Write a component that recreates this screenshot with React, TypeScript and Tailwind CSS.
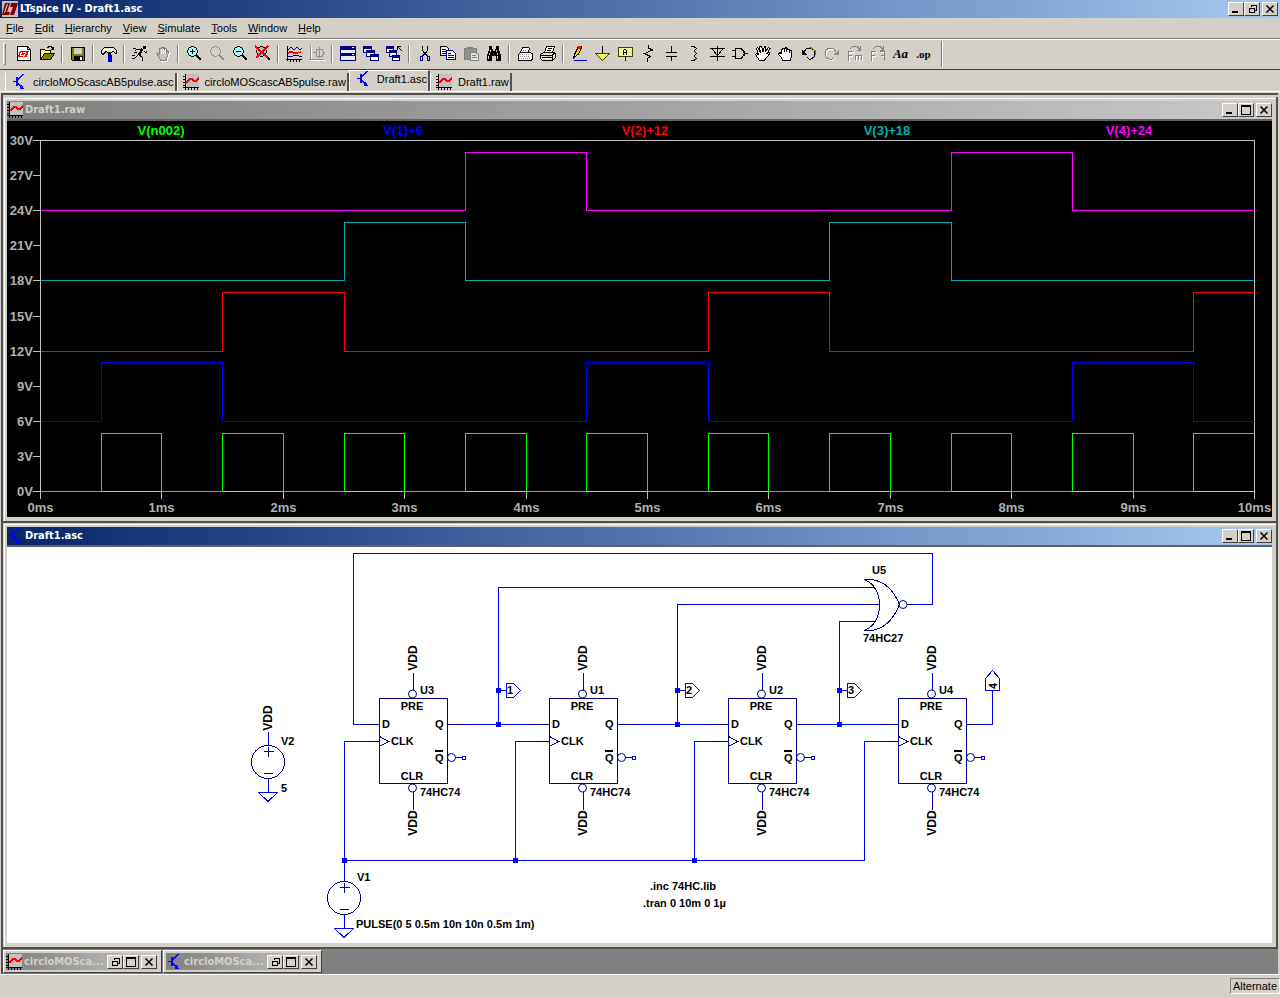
import type { ReactNode } from "react";

const MENU = ["File", "Edit", "Hierarchy", "View", "Simulate", "Tools", "Window", "Help"];

function Icon({ children, size = 17 }: { children: ReactNode; size?: number }) {
  return (
    <svg
      width={size}
      height={size}
      viewBox={`0 0 ${size} ${size}`}
      fill="none"
      stroke="#000"
      shapeRendering="crispEdges"
      className="block shrink-0"
      aria-hidden="true"
    >
      {children}
    </svg>
  );
}

function PlotIcon() {
  return (
    <Icon size={16}>
      <path d="M2 0h14v13H2z" fill="#c0c0c0" stroke="none" />
      <path d="M2.500 0v16M0 13.500h16M0 2.500h2M0 5.500h2M0 8.500h2M0 11.500h2M5.500 14v2M8.500 14v2M11.500 14v2M14.500 14v2" />
      <path d="M3 9l4-4h2l2 2h2l3-3" stroke="#f00" strokeWidth="2" />
    </Icon>
  );
}

function TransistorIcon() {
  return (
    <Icon size={16}>
      <path d="M2 7.500h3M7 5.500L12.500 0M7 9.500l5 5" stroke="#00f" />
      <path d="M6 3v9" stroke="#00f" strokeWidth="2" />
      <path d="M10 11h1l2 4h-4v-1z" fill="#00f" stroke="none" />
    </Icon>
  );
}

function LogoIcon() {
  return (
    <Icon size={16}>
      <path d="M0 0h16v16H0z" fill="#c0c0c0" stroke="none" />
      <path d="M3 2h5L5 11h3l-1 3H0z" fill="#800000" stroke="none" shapeRendering="auto" />
      <path d="M9 2h7l-4 12H8l3-8H8z" fill="#800000" stroke="none" shapeRendering="auto" />
      <path d="M5.500 3l-3 8.500" stroke="#e8e4e0" shapeRendering="auto" />
    </Icon>
  );
}

function Magnifier({ lens, stroke = "#000", children }: { lens: string; stroke?: string; children?: ReactNode }) {
  return (
    <>
      <circle cx="7.500" cy="6.500" r="4.800" fill={lens} stroke={stroke} />
      <path d="M11 10l5 5" stroke={stroke} strokeWidth="2.500" />
      {children}
    </>
  );
}

const HAND = "M5.500 15.500l-1-3-3-4 1-1 2 2v-6l1.500-.5.500 4v-5h2v5l1-4 1.500.5v5l1.500-2.500 1 1-1.500 5-1 3.500z";

type Tool = { name: string; art: ReactNode };

const TOOLS: Tool[][] = [
  [
    {
      name: "New Schematic",
      art: (
        <>
          <path d="M2.500 1.500h10l3 3v11h-13z" fill="#fff" />
          <path d="M12.500 1.500v3h3" />
          <path d="M5 6h9l-2 6H3z" fill="#f00" stroke="none" />
          <path d="M6.500 7l-1 3h3M8 7.500h3M10.500 8l-2 4" stroke="#fff" />
        </>
      ),
    },
    {
      name: "Open",
      art: (
        <>
          <path d="M2.500 13.500v-9h4l1 1h5v3" fill="#ffff80" />
          <path d="M2.500 14.500l4-6h10l-4 6z" fill="#808000" />
          <path d="M9.500 3l1.500-1.500h2l2 2M15.500 1.500v3h-3" />
        </>
      ),
    },
  ],
  [
    {
      name: "Save",
      art: (
        <>
          <path d="M2.500 2.500h13v13h-12l-1-1z" fill="#808000" />
          <path d="M5 3h8v6H5z" fill="#d4d0c8" stroke="none" />
          <path d="M5 11h9v4H5z" fill="#000" stroke="none" />
          <path d="M11 12h2v3h-2z" fill="#fff" stroke="none" />
        </>
      ),
    },
  ],
  [
    {
      name: "Control Panel",
      art: (
        <>
          <path d="M1.500 8.500v-3l3-3h9l3 3v3h-1l-2-2-3 1h-3l-1-1-2 1-1 2z" fill="#e4e2dc" />
          <path d="M5 4h8" stroke="#fff" />
          <path d="M9.500 8v2" strokeWidth="3" />
          <path d="M9.500 10v6.500" stroke="#00f" strokeWidth="3" />
          <path d="M11.500 10v6.500" stroke="#000080" />
        </>
      ),
    },
  ],
  [
    {
      name: "Run",
      art: (
        <>
          <path d="M12 1h3v3h-3z" fill="#000" stroke="none" />
          <path d="M11.500 4L8 10" strokeWidth="2.500" />
          <path d="M2 3.500h3M4 5.500l2-1h5M13 6l2 2 1-1.500M8 10l3 2v4M7 10l-3 3H1M3 7.500h3M1 10.500h3" />
        </>
      ),
    },
    {
      name: "Halt",
      art: (
        <>
          <path d={HAND} fill="#fff" stroke="#fff" transform="translate(2 1)" />
          <path d={HAND} fill="#c8c5be" stroke="#808080" transform="translate(1 0)" />
          <path d="M7.500 4v5M9.500 4v5M11.500 4v5" stroke="#fff" />
        </>
      ),
    },
  ],
  [
    {
      name: "Zoom to rectangle",
      art: (
        <Magnifier lens="#a0ffff">
          <path d="M5 6.500h5M7.500 4v5" strokeWidth="1.500" />
        </Magnifier>
      ),
    },
    { name: "Pan", art: <Magnifier lens="#d4d0c8" stroke="#909090" /> },
    {
      name: "Zoom back",
      art: (
        <Magnifier lens="#a0ffff">
          <path d="M5 6.500h5" />
        </Magnifier>
      ),
    },
    {
      name: "Zoom full extents",
      art: (
        <Magnifier lens="#60e0e8">
          <path d="M1 1l13 12M14 1L2 13" stroke="#f00" strokeWidth="2" />
        </Magnifier>
      ),
    },
  ],
  [
    {
      name: "Autorange",
      art: (
        <>
          <path d="M2.500 1v15M1 14.500h16M5.500 15v2M8.500 15v2M11.500 15v2M14.500 15v2" />
          <path d="M3 5l3-3 3 3 3-3 3 3 2-2M3 11.500h4l2-1h4l2 1h2" stroke="#000080" />
          <path d="M3 8l3-1.500 3 1.500h3l4-1" stroke="#f00" strokeWidth="1.500" />
        </>
      ),
    },
    {
      name: "Grid",
      art: (
        <>
          <path d="M3.500 2v14M2 15.500h15" stroke="#fff" />
          <path d="M2.500 1v14M1 14.500h15M5 7.500h3M8.500 4v8M9 4.500h5l2 3-2 4H9M11.500 2v11" stroke="#909090" />
        </>
      ),
    },
  ],
  [
    {
      name: "Tile",
      art: (
        <>
          <path d="M1.500 1.500h15v14h-15z" fill="#e8e8f0" stroke="#000080" />
          <path d="M1 3h16M1 9.500h16" stroke="#000080" strokeWidth="3" />
          <path d="M13 2.500h2M13 9.500h2" stroke="#fff" />
        </>
      ),
    },
    {
      name: "Cascade",
      art: (
        <>
          <path d="M1.500 1.500h8v6h-8zM4.500 5.500h8v6h-8zM8.500 9.500h8v6h-8z" fill="#fff" stroke="#000080" />
          <path d="M1 2.500h9M4 6.500h9M8 10.500h9" stroke="#000080" strokeWidth="2" />
        </>
      ),
    },
    {
      name: "Close all",
      art: (
        <>
          <path d="M1.500 1.500h7v6h-7zM4.500 5.500h7v6h-7zM7.500 10.500h7v5h-7z" fill="#fff" stroke="#000080" />
          <path d="M1 2.500h8M4 6.500h8M7 11.500h8" stroke="#000080" strokeWidth="2" />
          <path d="M12.500 5V1.500H16M13 2l4 4" />
        </>
      ),
    },
  ],
  [
    {
      name: "Cut",
      art: (
        <>
          <path d="M6.500 1v4l3 5M11.500 1v4l-3 5" />
          <path d="M8.500 9l-2 2M9.500 9l2 2" stroke="#000080" />
          <path d="M4.500 11.500h2v4h-2zM11.500 11.500h2v4h-2z" stroke="#000080" />
        </>
      ),
    },
    {
      name: "Copy",
      art: (
        <>
          <path d="M1.500 1.500h6l2 2v7h-8z" fill="#fff" />
          <path d="M3 4.500h4M3 6.500h4M3 8.500h4" />
          <path d="M7.500 5.500h6l3 3v6h-9z" fill="#fff" stroke="#000080" />
          <path d="M9 8.500h3M9 10.500h6M9 12.500h6" stroke="#000080" />
        </>
      ),
    },
    {
      name: "Paste",
      art: (
        <>
          <path d="M2.500 3.500h12v11h-12z" fill="#909090" stroke="#808080" />
          <path d="M5 2.500h6" stroke="#808080" strokeWidth="2" />
          <path d="M8.500 7.500h5l3 2v6h-8z" fill="#e4e2dc" stroke="#808080" />
          <path d="M10 10.500h4M10 12.500h5" stroke="#808080" />
        </>
      ),
    },
    {
      name: "Find",
      art: (
        <>
          <path d="M4 1h3v3h1v2h2V4h1V1h3v4l2 5v6h-5v-5H7v5H2v-6l2-5z" fill="#000" stroke="none" />
          <path d="M5.500 5v2M4.500 8v2M3.500 11v3M11.500 5v2M12.500 8v2M12.500 11v3" stroke="#d4d0c8" />
        </>
      ),
    },
  ],
  [
    {
      name: "Print Setup",
      art: (
        <>
          <path d="M4.500 7.500l2-5h6l1 1-1 4z" fill="#fff" />
          <path d="M2.500 9.500l2-2h10l1.500 1v6l-1 1h-12.500z" fill="#fff" />
          <path d="M7 5.500h4M4 9.500h10M4 11.500h10M5 13.500h9" stroke="#909090" strokeDasharray="1 1" />
        </>
      ),
    },
    {
      name: "Print",
      art: (
        <>
          <path d="M5.500 7.500l2-6h8l-2 6z" fill="#fff" />
          <path d="M1.500 9.500l3-2h11l1 1v4l-3 3h-10l-2-2z" fill="#e4e2dc" />
          <path d="M2 10.500h11v4M13 10.500l3-3M9 3.500h4M8 5.500h4M3 12.500h10" />
          <path d="M8 11.500h3" stroke="#c0c000" />
        </>
      ),
    },
  ],
  [
    {
      name: "Wire",
      art: (
        <>
          <path d="M4.500 11.500v-2l4-8h3v2l-4 7z" fill="#ffe000" />
          <path d="M8 2.500h3" stroke="#f00" strokeWidth="3" />
          <path d="M3 11h3l-3 4z" fill="#000" stroke="none" />
          <path d="M4 15.500h13" stroke="#00f" />
        </>
      ),
    },
    {
      name: "Ground",
      art: (
        <>
          <path d="M9.500 1v7" />
          <path d="M2.500 8.500h14l-7 7z" fill="#f0f060" stroke="#404000" />
        </>
      ),
    },
    {
      name: "Label Net",
      art: (
        <>
          <path d="M2.500 2.500h14v9h-14z" fill="#f4f4a0" stroke="#404000" strokeWidth="1.500" />
          <path d="M7.500 10V6l1-2h1l1 2v4M7.500 7.500h3M9.500 12v4" />
        </>
      ),
    },
    { name: "Resistor", art: <path d="M9.500 0v3l4 2-8 3.500 6 3-3 2v3.500" /> },
    { name: "Capacitor", art: <path d="M9.500 1v6M9.500 11v5M4 7h11M4 11h11" /> },
    { name: "Inductor", art: <path d="M6 1.500h3l2 1.500v1L9 6l2 2v1l-2 2 2 2v1l-2 1.500H6" /> },
    { name: "Diode", art: <path d="M9.500 1v15M2 3.500h15M4.500 4l5 7 5-7M2 11.500h15" /> },
    {
      name: "Component",
      art: <path d="M4.500 3.500h5l3 2 1 3-1 3-3 2h-5zM1 5.500h3M1 11.500h3M14 8.500h3" strokeWidth="1.500" />,
    },
    {
      name: "Move",
      art: (
        <path d="M5.500 15.500l-4-6 1-1 2 1-2-6 1-1 3 5-1-6h2l1.500 5 1.500-5h1v5l3-4 1.500 1-3 5 2-1v2l-4 5-1 1z" fill="#fff" />
      ),
    },
    {
      name: "Drag",
      art: (
        <>
          <path d="M5.500 15.500l-1-3-3-3 1-2 2 1v-4l2-1 1 1 1-2h1l1 2h2v1h2v6l-1 4z" fill="#fff" />
          <path d="M7.500 4v3M9.500 4v3M12.500 5v3" />
        </>
      ),
    },
    {
      name: "Undo",
      art: (
        <>
          <path d="M4 7l2-3 3-1h2l3 2 1 3-1 4-3 2H9l-2-2" />
          <path d="M9 2.500h2l4 3v4" stroke="#808000" />
          <path d="M1.500 4.500v5h5z" fill="#000" stroke="none" />
        </>
      ),
    },
    {
      name: "Redo",
      art: (
        <>
          <path d="M14 8l-2-3-3-1H7L4 6 3 9l1 4 3 2h3l2-2" stroke="#fff" />
          <path d="M13 7l-2-3-3-1H6L3 5 2 8l1 4 3 2h3l2-2" stroke="#808080" />
          <path d="M15.500 4.500v5h-5z" fill="#909090" stroke="none" />
        </>
      ),
    },
    {
      name: "Rotate",
      art: (
        <>
          <path d="M3.500 17V7.500H8M4 11.500h3M10.500 16v-4.500h6V16M13.500 12v4" stroke="#fff" />
          <path d="M2.500 16V6.500H7M3 10.500h3M9.500 15v-4.500h6V15M12.500 11v4M4 3.500l3-2h4l3 3M14.500 1v4h-4" stroke="#808080" />
        </>
      ),
    },
    {
      name: "Mirror",
      art: (
        <>
          <path d="M3.500 17V7.500H8M4 11.500h3M15.500 17V7.500H12M15 11.500h-2" stroke="#fff" />
          <path d="M2.500 16V6.500H7M3 10.500h3M15.500 16V6.500H11M15 10.500h-3M4 3.500l3-2h4l3 3M14.500 1v4h-4" stroke="#808080" />
        </>
      ),
    },
    { name: "Text", art: "Aa" },
    { name: "SPICE Directive", art: ".op" },
  ],
];

function ToolButton({ name, art }: Tool) {
  return (
    <button type="button" aria-label={name} className="flex h-[22px] w-[23px] items-center justify-center">
      {typeof art === "string" ? (
        <span
          className={`font-['Liberation_Serif',serif] leading-4 font-bold ${
            art === "Aa" ? "text-[13px] italic" : "text-[11px]"
          }`}
        >
          {art}
        </span>
      ) : (
        <Icon>{art}</Icon>
      )}
    </button>
  );
}

const GLYPHS = {
  Minimize: <path d="M2 9h6" strokeWidth="2" />,
  Restore: <path d="M5.500 4v-2h5v5H9M5 2h6M3.500 5.500h5v4h-5zM3 5h6" />,
  Maximize: <path d="M1.500 1.500h9v9h-9zM1 2h10" />,
  Close: <path d="M2.500 2.500l7 7M9.500 2.500l-7 7" strokeWidth="1.500" shapeRendering="auto" />,
};

function WindowButtons({ kinds }: { kinds: (keyof typeof GLYPHS)[] }) {
  return (
    <div className="flex shrink-0">
      {kinds.map((kind) => (
        <button
          key={kind}
          type="button"
          aria-label={kind}
          className="flex h-[14px] w-4 items-center justify-center border border-t-white border-r-[#404040] border-b-[#404040] border-l-white bg-[#d4d0c8] last:ml-0.5"
        >
          <Icon size={12}>{GLYPHS[kind]}</Icon>
        </button>
      ))}
    </div>
  );
}

function ChildWindow({
  title,
  icon,
  active = false,
  children,
}: {
  title: string;
  icon: ReactNode;
  active?: boolean;
  children: ReactNode;
}) {
  return (
    <section className="border-r-2 border-b-2 border-[#505050] bg-[#d4d0c8]">
      <div className="border-t border-l border-t-[#d4d0c8] border-l-[#d4d0c8]">
        <div className="border-t border-l border-white pt-0.5 pr-1 pb-1 pl-0.5">
          <header
            className={`flex h-[18px] items-center justify-between bg-linear-to-r ${
              active ? "from-[#0a246a] to-[#a6caf0] text-white" : "from-[#808080] to-[#c8c8c8] text-[#d4d0c8]"
            }`}
          >
            <div className="flex items-center gap-0.5">
              {icon}
              <h2 className="text-[11px] leading-4 font-bold">{title}</h2>
            </div>
            <WindowButtons kinds={["Minimize", "Maximize", "Close"]} />
          </header>
          <div className="border-t-2 border-[#606060]">{children}</div>
        </div>
      </div>
    </section>
  );
}

/* Waveform plot */

const X0 = 40;
const MS = 121.4;
const Y0 = 491;
const VOLT = 11.7;

const toX = (ms: number) => Math.round(X0 + ms * MS) + 0.5;
const toY = (v: number) => Math.round(Y0 - v * VOLT) + 0.5;

const TRACES = [
  { label: "V(4)+24", color: "#ff00ff", base: 24, rises: [3.5, 7.5], width: 1, labelX: 1129 },
  { label: "V(3)+18", color: "#00b0b0", base: 18, rises: [2.5, 6.5], width: 1, labelX: 887 },
  { label: "V(2)+12", color: "#ff0000", base: 12, rises: [1.5, 5.5, 9.5], width: 1, labelX: 645 },
  { label: "V(1)+6", color: "#0000ff", base: 6, rises: [0.5, 4.5, 8.5], width: 1, labelX: 403 },
  {
    label: "V(n002)",
    color: "#00ff00",
    base: 0,
    rises: [0.5, 1.5, 2.5, 3.5, 4.5, 5.5, 6.5, 7.5, 8.5, 9.5],
    width: 0.5,
    labelX: 161,
  },
];

function tracePath(base: number, rises: number[], width: number) {
  const low = toY(base);
  const high = toY(base + 5);
  let d = `M${toX(0)} ${low}`;
  for (const t of rises) {
    const end = Math.min(t + width, 10);
    d += `H${toX(t)}V${high}H${toX(end)}`;
    if (t + width < 10) d += `V${low}`;
  }
  if (rises[rises.length - 1] + width < 10) d += `H${toX(10)}`;
  return d;
}

function WaveformPlot() {
  const volts = Array.from({ length: 11 }, (_, i) => i * 3);
  const times = Array.from({ length: 11 }, (_, i) => i);

  return (
    <svg
      viewBox="7 121 1265 396"
      className="block h-auto w-full bg-black font-['Liberation_Sans',Arial,sans-serif] text-[13px] font-bold"
      role="img"
      aria-label="Waveforms"
    >
      <g fill="none" stroke="#c0c0c0" shapeRendering="crispEdges">
        <path d={`M${toX(0)} ${toY(30)}H${toX(10)}V${toY(0)}H${toX(0)}z`} />
        {volts.map((v) => (
          <path key={v} d={`M33 ${toY(v)}h7`} />
        ))}
        {times.map((t) => (
          <path key={t} d={`M${toX(t)} 491v8`} />
        ))}
      </g>
      <g fill="#b0b0b0">
        {volts.map((v) => (
          <text key={v} x="33" y={toY(v) + 4} textAnchor="end">
            {v}V
          </text>
        ))}
        {times.map((t) => (
          <text key={t} x={toX(t)} y="512" textAnchor="middle">
            {t}ms
          </text>
        ))}
      </g>
      {TRACES.map((trace) => (
        <g key={trace.label}>
          <text x={trace.labelX} y="135" textAnchor="middle" fill={trace.color}>
            {trace.label}
          </text>
          <path
            d={tracePath(trace.base, trace.rises, trace.width)}
            fill="none"
            stroke={trace.color}
            shapeRendering="crispEdges"
          />
        </g>
      ))}
    </svg>
  );
}

/* Schematic */

function Vdd({ x, y }: { x: number; y: number }) {
  return (
    <text transform={`translate(${x} ${y}) rotate(-90)`} textAnchor="middle" className="text-[12px]">
      VDD
    </text>
  );
}

// D flip-flop, origin at the top left corner of its body
function FlipFlop({ x, name }: { x: number; name: string }) {
  return (
    <g transform={`translate(${x} 698)`}>
      <g fill="none" stroke="#000080" shapeRendering="crispEdges">
        <path d="M.5 .5h68v85H.5zM-17 26.500H0M-17 43.500H0M69 26.500h17M.5 38.500l9 5-9 5M76 59.500h7" />
        <path d="M34.500-25v17M34.500 94v18" stroke="#0000c0" />
        <g shapeRendering="auto">
          <circle cx="33.500" cy="-4" r="4" />
          <circle cx="33.500" cy="90" r="4" />
          <circle cx="72.500" cy="59.500" r="4" />
        </g>
        <path d="M83.500 58.500h3v3h-3z" stroke="#00f" />
      </g>
      <Vdd x={38} y={-40} />
      <Vdd x={38} y={125} />
      <text x="41" y="-4">{name}</text>
      <text x="33" y="12" textAnchor="middle">PRE</text>
      <text x="3" y="30">D</text>
      <text x="56" y="30">Q</text>
      <text x="12" y="47">CLK</text>
      <text x="56" y="64">Q</text>
      <path d="M56 53h8" stroke="#000" strokeWidth="2" shapeRendering="crispEdges" />
      <text x="33" y="82" textAnchor="middle">CLR</text>
      <text x="41" y="98">74HC74</text>
    </g>
  );
}

function VoltageSource({ x, y }: { x: number; y: number }) {
  return (
    <g transform={`translate(${x} ${y})`} fill="none" stroke="#000080" shapeRendering="crispEdges">
      <circle cx="0" cy="0" r="16.500" />
      <path d="M-4-10.500h10M.5-15v10M-4 11.500h9" />
      <path d="M.5 17v13M-9.500 30.500h19l-9.500 9z" stroke="#00f" />
    </g>
  );
}

function NetFlag({ x, label }: { x: number; label: string }) {
  return (
    <g transform={`translate(${x} 690)`}>
      <path d="M0 .5h8M8.500-6.500h7l7 7-7 7h-7z" fill="none" stroke="#00f" shapeRendering="crispEdges" />
      <text x="9" y="4">{label}</text>
    </g>
  );
}

const NODES = [
  [498, 690], [498, 724], [677, 690], [677, 724], [839, 690], [839, 724], [344, 860], [515, 860], [694, 860],
];

function Schematic() {
  return (
    <svg
      viewBox="7 547 1265 396"
      className="block h-auto w-full bg-white font-['Liberation_Sans',Arial,sans-serif] text-[11px] font-bold"
      role="img"
      aria-label="Schematic"
    >
      <g fill="none" stroke="#00f" shapeRendering="crispEdges">
        <path d="M363 724.500h-9.500V553.500h579v51H915" />
        <path d="M498.500 724V587.500H857M677.500 724V604.500h180M839.500 724V621.500h18" />
        <path d="M465 724.500h68M635 724.500h77M813 724.500h69M983 724.500h9.500V690" />
        <path d="M363 741.500h-18.500V882M532 741.500h-16.500v119M712 741.500h-17.500v119M882 741.500h-17.500v119H344" />
        <path d="M268.500 732v14" />
        <path d="M985.500 690.500h14v-12l-7-8-7 8z" />
      </g>
      {NODES.map(([x, y]) => (
        <rect key={`${x}-${y}`} x={x - 2} y={y - 2} width="5" height="5" fill="#00f" />
      ))}
      <g fill="none" stroke="#000080" shapeRendering="crispEdges">
        <path d="M857 587.500h18M857 604.500h22M857 621.500h18M907 604.500h8" />
        <path d="M864 579.500h7C885 581 894 591 899.500 604.500C894 618 885 629 871 630.500h-7" />
        <path d="M864 579.500C874 583 879.500 593 879.500 605S874 627 864 630.500" />
        <circle cx="903" cy="604.500" r="4" shapeRendering="auto" />
      </g>
      <FlipFlop x={379} name="U3" />
      <FlipFlop x={549} name="U1" />
      <FlipFlop x={728} name="U2" />
      <FlipFlop x={898} name="U4" />
      <NetFlag x={498} label="1" />
      <NetFlag x={677} label="2" />
      <NetFlag x={839} label="3" />
      <text transform="translate(997 689) rotate(-90)">4</text>
      <VoltageSource x={268} y={762} />
      <VoltageSource x={344} y={898} />
      <Vdd x={272} y={718} />
      <text x="281" y="745">V2</text>
      <text x="281" y="792">5</text>
      <text x="357" y="881">V1</text>
      <text x="356" y="928">PULSE(0 5 0.5m 10n 10n 0.5m 1m)</text>
      <text x="872" y="574">U5</text>
      <text x="863" y="642">74HC27</text>
      <text x="650" y="890">.inc 74HC.lib</text>
      <text x="643" y="907">.tran 0 10m 0 1µ</text>
    </svg>
  );
}

const TABS = [
  { label: "circloMOScascAB5pulse.asc", icon: <TransistorIcon /> },
  { label: "circloMOScascAB5pulse.raw", icon: <PlotIcon /> },
  { label: "Draft1.asc", icon: <TransistorIcon />, active: true },
  { label: "Draft1.raw", icon: <PlotIcon /> },
];

const MINIMIZED = [
  { id: "raw", icon: <PlotIcon /> },
  { id: "asc", icon: <TransistorIcon /> },
];

export default function App() {
  return (
    <div className="flex min-h-screen flex-col bg-[#d4d0c8] font-['DejaVu_Sans_Condensed','Liberation_Sans',sans-serif] text-[11px] text-black">
      <header className="flex h-[18px] items-center justify-between bg-linear-to-r from-[#0a246a] to-[#a6caf0] pr-0.5 pl-0.5 text-white">
        <div className="flex items-center gap-0.5">
          <LogoIcon />
          <h1 className="text-[11px] leading-4 font-bold">LTspice IV - Draft1.asc</h1>
        </div>
        <WindowButtons kinds={["Minimize", "Restore", "Close"]} />
      </header>

      <nav className="flex h-[21px] items-center gap-[11px] border-b border-[#808080] pl-1.5 font-['Liberation_Sans',Arial,sans-serif]">
        {MENU.map((item) => (
          <button key={item} type="button" className="leading-4">
            <span className="underline">{item[0]}</span>
            {item.slice(1)}
          </button>
        ))}
      </nav>

      <div className="flex h-[31px] items-center border-t border-b border-t-white border-b-[#404040] pb-0.5 pl-[3px]">
        <div className="mr-[6px] h-[22px] w-[3px] border border-t-white border-r-[#808080] border-b-[#808080] border-l-white" />
        {TOOLS.map((group) => (
          <div
            key={group[0].name}
            className="flex items-center after:mx-[3px] after:h-[18px] after:w-0.5 after:border-l after:border-[#808080] after:bg-white last:after:ml-[6px] last:after:h-[26px]"
          >
            {group.map((tool) => (
              <ToolButton key={tool.name} {...tool} />
            ))}
          </div>
        ))}
      </div>

      <div
        role="tablist"
        className="flex h-[22px] items-end border-b border-white pl-[5px] font-['Liberation_Sans',Arial,sans-serif]"
      >
        {TABS.map((tab) => (
          <button
            key={tab.label}
            type="button"
            role="tab"
            aria-selected={!!tab.active}
            className={`flex items-center gap-1.5 border-r-2 border-l border-r-[#505050] border-l-white pr-px pl-[5px] leading-4 ${
              tab.active ? "h-[21px] border-t border-t-white pb-1" : "h-[18px]"
            }`}
          >
            {tab.icon}
            {tab.label}
          </button>
        ))}
      </div>

      <main className="mt-px mr-0.5 ml-px flex grow flex-col border-t-2 border-l-2 border-[#505050] bg-[#808080]">
        <div className="border-t-2 border-[#d4d0c8]">
          <ChildWindow title="Draft1.raw" icon={<PlotIcon />}>
            <WaveformPlot />
          </ChildWindow>
          <ChildWindow title="Draft1.asc" icon={<TransistorIcon />} active>
            <Schematic />
          </ChildWindow>
        </div>
        <div className="flex gap-px py-px">
          {MINIMIZED.map((win) => (
            <section
              key={win.id}
              className="flex h-[23px] w-[159px] border border-t-white border-r-[#404040] border-b-[#404040] border-l-white bg-[#d4d0c8] py-0.5 pr-1 pl-0.5"
            >
              <div className="flex grow items-center justify-between bg-linear-to-r from-[#808080] to-[#c8c8c8] text-[#d4d0c8]">
                <div className="flex items-center gap-0.5">
                  {win.icon}
                  <h2 className="text-[11px] leading-4 font-bold">circloMOSca...</h2>
                </div>
                <WindowButtons kinds={["Restore", "Maximize", "Close"]} />
              </div>
            </section>
          ))}
        </div>
      </main>

      <footer className="flex h-6 items-start justify-end border-t border-white pt-[3px]">
        <span className="border border-t-[#808080] border-r-white border-b-white border-l-[#808080] px-0.5 font-['Liberation_Sans',Arial,sans-serif] text-[11px] leading-[14px]">
          Alternate
        </span>
      </footer>
    </div>
  );
}
